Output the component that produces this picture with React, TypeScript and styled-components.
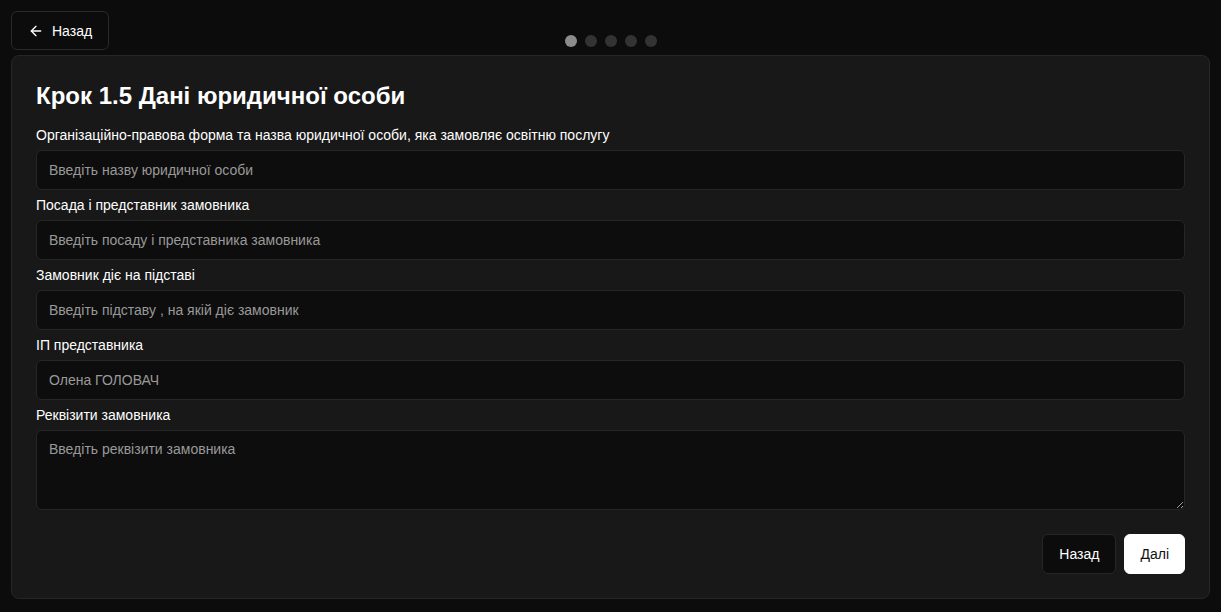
import React from "react";
import styled, { createGlobalStyle } from "styled-components";
import { ArrowLeft } from "lucide-react";

const Global = createGlobalStyle`
  html, body { margin: 0; padding: 0; background: #0c0c0c; }
  body { font-family: "Liberation Sans", Arial, sans-serif; color: #fff; }
  * { box-sizing: border-box; }
`;

const Page = styled.div`
  padding: 11px;
  display: flex;
  flex-direction: column;
  gap: 5px;
  min-height: 612px;
`;

const Header = styled.div`
  display: grid;
  grid-template-columns: 1fr auto 1fr;
  align-items: end;
`;

const TopButton = styled.button`
  justify-self: start;
  display: flex;
  align-items: center;
  gap: 8px;
  height: 39px;
  padding: 0 16px;
  background: #0c0c0c;
  border: 1px solid #2a2a2a;
  border-radius: 6px;
  color: #fff;
  font-family: inherit;
  font-size: 14px;
  cursor: pointer;
`;

const Dots = styled.div`
  display: flex;
  gap: 8px;
  margin-bottom: 3px;
`;

const Dot = styled.span<{ $active?: boolean }>`
  width: 12px;
  height: 12px;
  border-radius: 50%;
  background: ${(p) => (p.$active ? "#8c8c8c" : "#333333")};
`;

const Card = styled.div`
  background: #181818;
  border: 1px solid #262626;
  border-radius: 8px;
  padding: 24px;
  display: flex;
  flex-direction: column;
`;

const Title = styled.h1`
  margin: 0 0 13px;
  font-size: 24px;
  line-height: 32px;
  font-weight: 700;
`;

const Fields = styled.div`
  display: flex;
  flex-direction: column;
  gap: 5px;
`;

const Field = styled.label`
  display: flex;
  flex-direction: column;
  gap: 5px;
`;

const Label = styled.span`
  font-size: 14px;
  line-height: 20px;
  color: #fff;
`;

const Input = styled.input`
  height: 40px;
  background: #0d0d0d;
  border: 1px solid #262626;
  border-radius: 6px;
  padding: 0 12px;
  color: #fff;
  font-family: inherit;
  font-size: 14px;
  outline: none;
  &::placeholder { color: #999999; }
`;

const TextArea = styled.textarea`
  height: 80px;
  background: #0d0d0d;
  border: 1px solid #262626;
  border-radius: 6px;
  padding: 8px 12px;
  color: #fff;
  font-family: inherit;
  font-size: 14px;
  line-height: 20px;
  outline: none;
  resize: vertical;
  &::placeholder { color: #999999; }
`;

const Actions = styled.div`
  display: flex;
  justify-content: flex-end;
  gap: 8px;
  margin-top: 24px;
`;

const Btn = styled.button<{ $primary?: boolean }>`
  height: 40px;
  padding: 0 ${(p) => (p.$primary ? "15px" : "16px")};
  border-radius: 6px;
  font-family: inherit;
  font-size: 14px;
  cursor: pointer;
  background: ${(p) => (p.$primary ? "#ffffff" : "#0c0c0c")};
  color: ${(p) => (p.$primary ? "#111111" : "#ffffff")};
  border: 1px solid ${(p) => (p.$primary ? "#ffffff" : "#262626")};
`;

const fields = [
  {
    label: "Організаційно-правова форма та назва юридичної особи, яка замовляє освітню послугу",
    placeholder: "Введіть назву юридичної особи",
  },
  { label: "Посада і представник замовника", placeholder: "Введіть посаду і представника замовника" },
  { label: "Замовник діє на підставі", placeholder: "Введіть підставу , на якій діє замовник" },
  { label: "ІП представника", placeholder: "Олена ГОЛОВАЧ" },
];

export default function App() {
  return (
    <>
      <Global />
      <Page>
        <Header>
          <TopButton>
            <ArrowLeft size={16} strokeWidth={2} />
            Назад
          </TopButton>
          <Dots>
            <Dot $active />
            <Dot />
            <Dot />
            <Dot />
            <Dot />
          </Dots>
          <div />
        </Header>
        <Card>
          <Title>Крок 1.5 Дані юридичної особи</Title>
          <Fields>
            {fields.map((f) => (
              <Field key={f.label}>
                <Label>{f.label}</Label>
                <Input placeholder={f.placeholder} />
              </Field>
            ))}
            <Field>
              <Label>Реквізити замовника</Label>
              <TextArea placeholder="Введіть реквізити замовника" />
            </Field>
          </Fields>
          <Actions>
            <Btn>Назад</Btn>
            <Btn $primary>Далі</Btn>
          </Actions>
        </Card>
      </Page>
    </>
  );
}
